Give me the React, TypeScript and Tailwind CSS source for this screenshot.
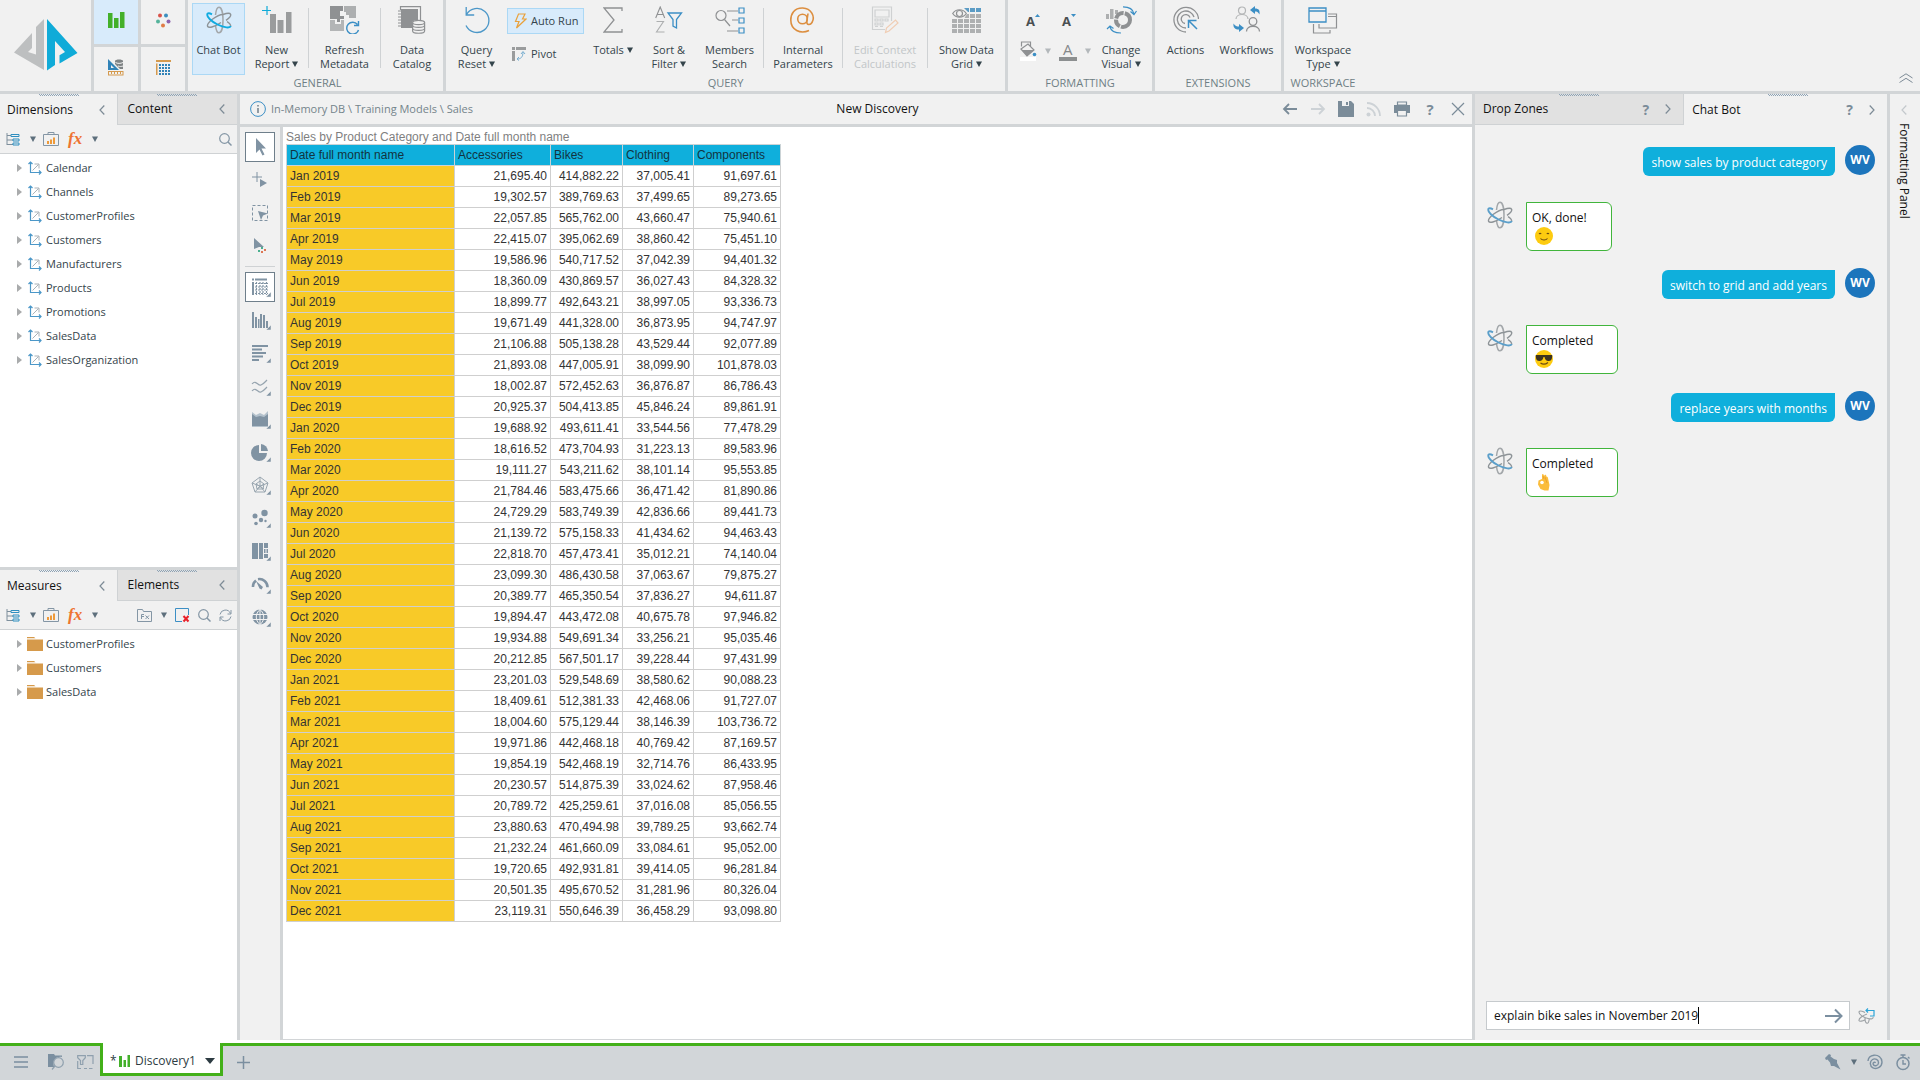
import React from 'react';

type IconProps = { className?: string };

interface SvgProps {
    w: number;
    h: number;
    children: React.ReactNode;
    className?: string;
}

const Svg: React.FC<SvgProps> = ({ w, h, children, className = '' }) => (
    <svg width={w} height={h} viewBox={`0 0 ${w} ${h}`} fill="none" className={`flex-shrink-0 ${className}`} aria-hidden="true">
        {children}
    </svg>
);

/* ---------- shared icons ---------- */

const Caret: React.FC<IconProps> = ({ className = 'text-[#5d6f7c]' }) => (
    <Svg w={6} h={6} className={className}>
        <path d="M0 .5h6L3 6z" fill="currentColor" />
    </Svg>
);

const Chevron: React.FC<{ right?: boolean; light?: boolean }> = ({ right, light }) => (
    <Svg w={6} h={10}>
        <path d={right ? 'M.7.5L5 5 .7 9.5' : 'M5.3.5L1 5l4.3 4.5'} stroke={light ? '#c3c8cc' : '#7d8b96'} strokeWidth="1.2" />
    </Svg>
);

const AtomIcon: React.FC<{ accent: string }> = ({ accent }) => (
    <Svg w={26} h={28}>
        <path d="M9.5 9C10 4 11.300 1.200 13 1.200c2.500 0 4 5.800 4 12.800s-1.500 12.800-4 12.800c-1.700 0-3-2.800-3.500-7.500" stroke="#a3a7aa" strokeWidth="1.500" />
        <path d="M17 8.500c4-1.500 7-1.500 7.600-.2.600 1.500-1.200 3.700-4.600 6M15 16.500c-6 4-12 6-13.300 4-.8-1.400.8-4 4.300-7 4-3 8-5 11-5M21 15.500c2.500 1.800 3.800 3.500 3.600 4.500" stroke="#8d9397" strokeWidth="1.400" />
        <path d="M6 8.300C3.500 7 1.500 6.800 1.200 8.300c-.6 2.600 4.300 7.200 10.300 10.200 6.500 3.200 12.600 4 13.300 1.600" stroke={accent} strokeWidth="1.900" />
    </Svg>
);

const SearchIcon = () => (
    <Svg w={13} h={13}>
        <circle cx="5.5" cy="5.5" r="4.8" stroke="#8496a5" strokeWidth="1.2" />
        <path d="M9 9l3.5 3.5" stroke="#8496a5" strokeWidth="1.5" />
    </Svg>
);

const BarsIcon: React.FC<{ small?: boolean }> = ({ small }) => small ? (
    <Svg w={12} h={12}>
        <path d="M0 1h3v11H0zM4.5 5H7v7H4.500zM8.500 0H11v12H8.500z" fill="#43b02a" />
    </Svg>
) : (
    <Svg w={17} h={16}>
        <path d="M0 1h4.500v15H0zM6 6h4.500v10H6zM12 0h4.500v16H12z" fill="#43b02a" />
    </Svg>
);

/* ---------- ribbon icons ---------- */

const Logo = () => (
    <Svg w={64} h={52}>
        <path d="M18 14L0 33.500 30 51V0l-8 8v27.500L14 33l4-4z" fill="#bdbfc0" />
        <path d="M33 0l30.500 34-18 10.500v-8.300l5.500-3.300L41 22v24l-8 5.500z" fill="#10abd8" />
    </Svg>
);

const DotsIcon = () => (
    <Svg w={15} h={15}>
        <circle cx="4" cy="2.500" r="2" fill="#d9534a" />
        <circle cx="10" cy="2.500" r="2" fill="#3c8fc0" />
        <circle cx="2" cy="8.500" r="2" fill="#55b39b" />
        <circle cx="12.500" cy="8.500" r="2" fill="#8d62ad" />
        <circle cx="7" cy="12.500" r="2" fill="#e07b45" />
    </Svg>
);

const ModelIcon = () => (
    <Svg w={16} h={17}>
        <path d="M0 0l11 11H0z" fill="#3183b8" />
        <path d="M3 6l3 3H3z" fill="#f1f1f1" />
        <path d="M7 2c0-2 8-2 8 0v8h-3L7 5z" fill="#7f8385" />
        <path d="M7.500 3.500c2 1.200 5 1.200 7.500 0M10 7c2 .8 3.500.5 5 0" stroke="#f1f1f1" />
        <rect x=".5" y="12.500" width="14.500" height="3.500" stroke="#d59a4e" />
        <path d="M3.500 13v2M6.500 13v2M9.500 13v2M12.500 13v2" stroke="#d59a4e" />
    </Svg>
);

const GridColorIcon = () => (
    <Svg w={15} h={15}>
        <path d="M0 0h15v2H0zM0 3.500h1.500V15H0z" fill="#d59a4e" />
        <path d="M3 4h2v2H3zM6 4h2v2H6zM9 4h2v2H9zM12 4h2v2h-2zM3 7h2v2H3zM6 7h2v2H6zM9 7h2v2H9zM12 7h2v2h-2zM3 10h2v2H3zM6 10h2v2H6zM9 10h2v2H9zM12 10h2v2h-2zM3 13h2v2H3zM6 13h2v2H6zM9 13h2v2H9zM12 13h2v2h-2z" fill="#3183b8" />
    </Svg>
);

const NewReportIcon = () => (
    <Svg w={30} h={28}>
        <path d="M5 0v9M0 4.500h9" stroke="#10abd8" strokeWidth="1.200" />
        <path d="M8 8h6v19H8zM15.500 14h6v13h-6zM24 6h5.500v21H24z" fill="#9a9c9d" />
    </Svg>
);

const RefreshMetaIcon = () => (
    <Svg w={30} h={28}>
        <path d="M0 0h13v5h-3v5h4v3H10v3H7v-3H0z" fill="#8f9193" />
        <path d="M14 0h12v12h-7V9h-3V6h-2z" fill="#adafb0" />
        <path d="M0 14h5v4h6v-4h3v11H0z" fill="#b3b5b6" />
        <path d="M27.500 18.500a6 6 0 1 0 1 5.500M28.500 15v4.500H24" stroke="#3c8fc5" strokeWidth="1.400" />
    </Svg>
);

const CatalogIcon = () => (
    <Svg w={30} h={28}>
        <path d="M3.500 4V.7h20V14M1 5h5M1 8h5M1 11h5M1 14h5M1 17h5M1 20h5" stroke="#8f9193" strokeWidth="1.200" />
        <path d="M4 3h17v11c-4 0-6 1-6 4v4H4z" fill="#8f9193" />
        <path d="M15.600 16.500v8.500c0 3 12 3 12 0v-8.500" fill="#f1f1f1" stroke="#8f9193" strokeWidth="1.200" />
        <ellipse cx="21.600" cy="16.500" rx="6" ry="2.200" fill="#f1f1f1" stroke="#8f9193" strokeWidth="1.200" />
        <path d="M15.600 19.500c0 2.500 12 2.500 12 0M15.600 22.500c0 2.500 12 2.500 12 0" stroke="#8f9193" strokeWidth="1.200" />
    </Svg>
);

const ResetIcon = () => (
    <Svg w={26} h={27}>
        <path d="M2.500 7.500A12 12 0 1 1 2 18.500M2.200 0v8h8" stroke="#4b97c8" strokeWidth="1.300" />
    </Svg>
);

const BoltIcon = () => (
    <Svg w={13} h={16}>
        <path d="M4.500 1H11L8.500 6H12L2.500 15 5 8.500H1.500z" stroke="#e9a13c" strokeWidth="1.200" />
    </Svg>
);

const PivotIcon = () => (
    <Svg w={15} h={14}>
        <path d="M0 0h3v3H0zM4 0h10v3H4zM0 4h3v10H0z" fill="#9a9c9d" />
        <path d="M5 12c4 0 6-2 6-7M9 7l2-2.500L13 7M7 10l-2 2 2 1.500" stroke="#78aed0" />
    </Svg>
);

const SigmaIcon = () => (
    <Svg w={20} h={26}>
        <path d="M19 4V1H1l10 12L1 25h18v-3" stroke="#8f9193" strokeWidth="1.300" />
    </Svg>
);

const SortIcon = () => (
    <Svg w={28} h={28}>
        <path d="M.7 12L5.200 1l4.500 11M2.200 8.500h6" stroke="#8f9193" strokeWidth="1.100" />
        <path d="M1.500 15.500h7L1.500 26h8" stroke="#adafb0" strokeWidth="1.100" />
        <path d="M13 7h13.500L21.500 13.500V22l-3.500-2v-6.500z" stroke="#3c8fc5" strokeWidth="1.300" />
    </Svg>
);

const MembersIcon = () => (
    <Svg w={30} h={28}>
        <circle cx="6" cy="9.500" r="5" stroke="#8f9193" strokeWidth="1.200" />
        <path d="M9.500 13.500L15 20M12 5h11M17 14h6M12 25h11" stroke="#8f9193" strokeWidth="1.200" />
        <path d="M24 2h5v5h-5zM24 12h5v5h-5zM24 22h5v5h-5z" stroke="#3c8fc5" strokeWidth="1.200" />
    </Svg>
);

const AtIcon = () => (
    <Svg w={26} h={26}>
        <circle cx="12.500" cy="12" r="4.800" stroke="#dc8e3f" strokeWidth="1.600" />
        <path d="M18 6.500l-1.200 8c-.3 3.800 3.500 3.800 5.200 1 3.500-6-.8-14-9.300-14.500C4 .8.800 7 .8 13c0 10 9.700 14.500 18.200 10.500" stroke="#dc8e3f" strokeWidth="1.600" />
    </Svg>
);

const CalculatorIcon = () => (
    <Svg w={28} h={28}>
        <path d="M20.500 15V1h-19v22.500H14" stroke="#cfd1d2" strokeWidth="1.200" />
        <path d="M4 4h14v7H4zM4 13h3v2H4zM9 13h3v2H9zM14 13h3v2h-3zM4 17h3v2H4zM9 17h3v2H9zM4 20.500h3M9 20.500h3" stroke="#cfd1d2" strokeWidth="1.200" />
        <path d="M14.500 26.500l1-4.500 9-8 2.500 3-9 8z" stroke="#f0cdb4" strokeWidth="1.200" />
    </Svg>
);

const DATA_GRID_ROWS = [1, 7, 12, 17, 22];

const ShowGridIcon = () => (
    <Svg w={30} h={27}>
        {DATA_GRID_ROWS.map((y) =>
            [0, 6, 12, 18, 24].map((x) => (
                <rect key={`${x}-${y}`} x={x} y={y} width="5" height="4" fill={y === 1 ? '#5c9cc5' : '#aeb0b1'} />
            ))
        )}
        <path d="M0 0h11l5 5-4 7H0z" fill="#f1f1f1" />
        <path d="M.7 6.500C4 1.500 11 1.500 14.300 6.500 11 11.500 4 11.500.7 6.500z" fill="#f1f1f1" stroke="#8f9193" strokeWidth="1.200" />
        <circle cx="7.500" cy="6.500" r="3" stroke="#8f9193" strokeWidth="1.200" />
    </Svg>
);

const BucketIcon = () => (
    <Svg w={17} h={20}>
        <path d="M1.500 5.500V1h9v4M1 8l7-5 6 6-7 6z" stroke="#8f9193" strokeWidth="1.200" />
        <path d="M2 9h12l-7 6z" fill="#8f9193" />
        <circle cx="14.500" cy="13.500" r="1.800" fill="#3c8fc5" />
        <path d="M0 16h16v4H0z" fill="#fff" />
    </Svg>
);

const ChangeVisualIcon = () => (
    <Svg w={31} h={28}>
        <path d="M0 8h3v5H0zM4 3h3.500v10H4zM9 4h3v4H9z" fill="#adafb0" />
        <circle cx="17" cy="14" r="7" stroke="#8f9193" strokeWidth="4" strokeDasharray="13 1.200 8 1.200 10 1.200" />
        <path d="M17 .8c6 0 10 2 11 7M24.500 5.500l3.500 3 2.500-3.500M15 27C8 27 5 25 4 21M1 23l3-3 3.500 2.500" stroke="#3c8fc5" strokeWidth="1.200" />
    </Svg>
);

const ActionsIcon = () => (
    <Svg w={26} h={28}>
        <path d="M13 26A12.300 12.300 0 1 1 25.500 13M13 22A8.500 8.500 0 1 1 21 11M12 17.500a4.500 4.500 0 1 1 5-6" stroke="#8f9193" strokeWidth="1.300" />
        <path d="M15 14l9 9M15.500 22v-7.500h8" stroke="#3c8fc5" strokeWidth="1.500" />
    </Svg>
);

const WorkflowsIcon = () => (
    <Svg w={28} h={28}>
        <circle cx="9" cy="4.500" r="3.500" stroke="#b3b5b6" strokeWidth="1.200" />
        <path d="M3 13c0-6 12-6 12 0" stroke="#b3b5b6" strokeWidth="1.200" />
        <circle cx="20" cy="15.500" r="3.800" stroke="#8f9193" strokeWidth="1.300" />
        <path d="M13.500 25.500c0-7 13-7 13 0" stroke="#8f9193" strokeWidth="1.300" />
        <path d="M17 4l5-4v2.500c4 0 5 2 4.500 6C25 6 24 5.500 22 5.500V8zM11 22l-5 4v-2.500c-4 0-6-2-5.500-6C2 20 4 20.500 6 20.500V18z" fill="#3c8fc5" />
    </Svg>
);

const WorkspaceIcon = () => (
    <Svg w={30} h={27}>
        <path d="M1 1h17v14H1zM1 4h17" stroke="#3c8fc5" strokeWidth="1.300" />
        <path d="M20 7h8.500v14H11v-4M20 9.500h8M5.500 17v9H22v-3" stroke="#8f9193" strokeWidth="1.200" />
    </Svg>
);

/* ---------- panel icons ---------- */

const TreeIcon = () => (
    <Svg w={14} h={13}>
        <path d="M1 0v12M1 2.500h4M1 7h6M1 11.500h6" stroke="#7e8f9c" />
        <path d="M5 1.500h8v2H5zM7 6h6v2H7zM7 10h6v2H7z" stroke="#2f8fc0" />
    </Svg>
);

const CaseIcon = () => (
    <Svg w={16} h={14}>
        <path d="M.5 2.500h15v11H.5zM5 2V.5h6V2" stroke="#8496a5" />
        <path d="M4 9h2v3H4zM7 7.500h2V12H7zM10 5.500h2V12h-2z" fill="#ee9a3a" />
    </Svg>
);

const AxesIcon = () => (
    <Svg w={14} h={14}>
        <path d="M2.500 1v10.500H13M.5 3l2-2 2 2M11 9.500l2 2-2 2" stroke="#4b97c8" strokeWidth="1.200" />
        <path d="M4.500 9.500l6-6M6.500 3h4.500v4.500" stroke="#a9b1b7" />
    </Svg>
);

const FolderIcon = () => (
    <Svg w={16} h={14}>
        <path d="M0 0h7l1.500 1.200H0zM0 2.500h16V14H0z" fill="#d69a4b" />
    </Svg>
);

const FxFolderIcon = () => (
    <Svg w={16} h={13}>
        <path d="M.5.500h5l1 2h8v10H.5z" stroke="#8496a5" />
        <path d="M4.500 10V5.500H7M4.500 7.500H7M8.500 6.500l3.500 3.500M12 6.500L8.500 10" stroke="#8496a5" />
    </Svg>
);

const DeleteBoxIcon = () => (
    <Svg w={15} h={15}>
        <path d="M13.500 7V.5H.5v13H7" stroke="#3c8fc5" />
        <path d="M8.500 8l5 5.500M13.500 8l-5 5.500" stroke="#e8202a" strokeWidth="2" />
    </Svg>
);

const SyncIcon = () => (
    <Svg w={13} h={13}>
        <path d="M1 5.500a5.500 5.500 0 0 1 10.500-1M12 1v4H8.500M12 7.500a5.500 5.500 0 0 1-10.500 1M1 12V8h3.500" stroke="#8496a5" />
    </Svg>
);

/* ---------- canvas tool icons ---------- */

const C = '#8093a3';

const canvasTools: { name: string; art: React.ReactNode }[] = [
    { name: 'Select', art: <path d="M6 1v15l3.500-3.500 3 6 2-1-3-6h4.500z" fill={C} /> },
    { name: 'Add select', art: <><path d="M7 2v10M2 7h10" stroke={C} /><path d="M10 9l7 4-7 4z" fill={C} /></> },
    { name: 'Lasso', art: <><path d="M2.500 2.500h15v15h-15z" stroke={C} strokeDasharray="3 2" /><path d="M8 8l10 2.500-5 2-2 4.500z" fill={C} /></> },
    { name: 'Point select', art: <><path d="M4 2l10 9H9l-5 2z" fill={C} /><path d="M11 11h2v2h-2zM8 14h2v2H8z" fill="#4ab08f" /><path d="M14 13h2v2h-2zM11 15h2v2h-2z" fill="#dd7755" /></> },
];

const visualTools: { name: string; art: React.ReactNode }[] = [
    {
        name: 'Grid',
        art: (
            <>
                <path d="M5 2.500h12M3 5v13M2 2.500h2" stroke={C} strokeWidth="2" />
                <path d="M6.500 5v13M10 5v13M13 5v13M16.500 5v13M5 6.500h13M5 10h13M5 13h13M5 16.500h13" stroke={C} strokeWidth="1.200" strokeDasharray="2 1" />
            </>
        ),
    },
    { name: 'Column', art: <path d="M2 2h2v16H2zM5 7h2v11H5zM8 9h1.500v9H8zM10 4h2v14h-2zM13 5h2v13h-2zM16 11h2v7h-2z" fill={C} /> },
    { name: 'Bar', art: <path d="M2 2h16v2H2zM2 5.500h10v2H2zM2 9h14v2H2zM2 12.500h11v2H2zM2 16h7v2H2z" fill={C} /> },
    { name: 'Line', art: <path d="M2 8c4-5 6 2.500 9 1 2.500-1 4-3 6-5M2 15c4-5 6 2.500 9 1 2.500-1 4-3 6-5" stroke="#95a3ae" strokeWidth="1.200" /> },
    { name: 'Area', art: <><path d="M2 3l4 3 4-2 4 2 4-4v16H2z" fill="#b3c1cc" /><path d="M2 5l4 3 4-1 4 1 4-3v12H2z" fill={C} /></> },
    { name: 'Pie', art: <><path d="M9 3v8h8a8 8 0 1 1-8-8z" fill={C} /><path d="M11 2a7.500 7.500 0 0 1 7 7h-7z" fill={C} /></> },
    { name: 'Radar', art: <path d="M10 2l8 6-3 9H5L2 8zM10 6l4 3-1 5H7L6 9zM10 2v9l8-3M10 11l5 6M10 11l-5 6M10 11L2 8M6 9l8 5M14 9l-7 5" stroke="#98a5af" /> },
    { name: 'Scatter', art: <><circle cx="14.500" cy="5" r="3.200" fill={C} /><circle cx="5" cy="8" r="2.500" fill={C} /><circle cx="11" cy="12" r="2.200" fill={C} /><circle cx="6" cy="15.500" r="1.800" fill={C} /><circle cx="15.500" cy="13" r="1.200" fill={C} /></> },
    { name: 'Treemap', art: <path d="M2 2h6v16H2zM9 2h4v16H9zM14 2h4v5h-4zM14 8h1.500v4H14zM16.500 8H18v4h-1.500zM14 13h4v4h-4z" fill={C} /> },
    { name: 'Gauge', art: <><path d="M3 13a7.500 7.500 0 0 1 3-6.500M8 5.200a8 8 0 0 1 9.500 8" stroke={C} strokeWidth="2.600" /><path d="M6 7l7 6-1.500 2.500-2-1z" fill={C} /></> },
    { name: 'Map', art: <><circle cx="10" cy="10" r="7.500" fill={C} /><path d="M2 7.500h16M2 12.500h16M10 2v16M10 2.500c-5 4-5 11 0 15M10 2.500c5 4 5 11 0 15" stroke="#f1f1f1" /></> },
];

/* ---------- ribbon ---------- */

interface RibbonButtonProps {
    icon: React.ReactNode;
    lines: string[];
    width: string;
    menu?: boolean;
    active?: boolean;
    disabled?: boolean;
}

const RibbonButton: React.FC<RibbonButtonProps> = ({ icon, lines, width, menu, active, disabled }) => (
    <button
        disabled={disabled}
        className={`flex h-[72px] flex-col items-center border pt-[3px] text-[11px] leading-[14px] ${width} ${
            active ? 'border-[#abd8f5] bg-[#d8ebfb]' : 'border-transparent'
        } ${disabled ? 'text-[#c2c6c8]' : 'text-[#34444b]'}`}
    >
        <span className="mb-[10px] flex h-[26px] items-center">{icon}</span>
        {lines.map((line, i) => (
            <span key={line} className="flex items-center gap-[3px] whitespace-nowrap">
                {line}
                {menu && i === lines.length - 1 && <Caret className="text-[#34444b]" />}
            </span>
        ))}
    </button>
);

const Group: React.FC<{ label: string; className?: string; last?: boolean; children: React.ReactNode }> = ({ label, className = '', last, children }) => (
    <section className={`flex flex-col justify-between pt-[3px] ${last ? '' : 'border-r-[3px] border-[#d2d5d7]'} ${className}`}>
        <div className="flex">{children}</div>
        <h2 className="text-center text-[11px] leading-4 text-[#6f7f85]">{label}</h2>
    </section>
);

const Separator = () => <span className="mt-[5px] h-[60px] w-px bg-[#cfd2d4]" />;

const LetterSize: React.FC<{ down?: boolean }> = ({ down }) => (
    <button aria-label={down ? 'Decrease font' : 'Increase font'} className="flex h-6 w-9 items-start justify-center text-[#4a4f52]">
        <span className="text-[13px] font-bold leading-6">A</span>
        <Svg w={5} h={12}>
            <path d={down ? 'M0 5h5L2.500 8z' : 'M0 8h5L2.500 5z'} fill="#3c8fc5" />
        </Svg>
    </button>
);

const Ribbon = () => (
    <header className="flex h-[94px] flex-shrink-0 border-b-[3px] border-[#d2d5d7] bg-[#f1f1f1]">
        <div className="flex w-[94px] items-end justify-center border-r-[3px] border-[#d2d5d7] pb-5">
            <Logo />
        </div>
        <nav className="grid w-[94px] grid-cols-2 grid-rows-2 gap-[3px] border-r-[3px] border-[#d2d5d7] bg-[#d2d5d7]">
            <button aria-label="Discover" className="flex items-center justify-center bg-[#d8ebfb] pb-1"><BarsIcon /></button>
            <button aria-label="Present" className="flex items-center justify-center bg-[#f1f1f1] pb-1"><DotsIcon /></button>
            <button aria-label="Model" className="flex items-center justify-center bg-[#f1f1f1] pb-1"><ModelIcon /></button>
            <button aria-label="Formulate" className="flex items-center justify-center bg-[#f1f1f1] pb-1"><GridColorIcon /></button>
        </nav>
        <Group label="GENERAL" className="w-[258px] pl-[4px]">
            <RibbonButton icon={<AtomIcon accent="#10abe0" />} lines={['Chat Bot']} width="w-[53px]" active />
            <RibbonButton icon={<NewReportIcon />} lines={['New', 'Report']} width="w-[63px]" menu />
            <Separator />
            <RibbonButton icon={<RefreshMetaIcon />} lines={['Refresh', 'Metadata']} width="w-[71px]" />
            <Separator />
            <RibbonButton icon={<CatalogIcon />} lines={['Data', 'Catalog']} width="w-[62px]" />
        </Group>
        <Group label="QUERY" className="w-[562px]">
            <RibbonButton icon={<ResetIcon />} lines={['Query', 'Reset']} width="w-[61px]" menu />
            <div className="flex w-[77px] flex-col gap-2 pt-[5px] text-[11px] text-[#34444b]">
                <button className="flex h-[26px] items-center gap-1 border border-[#abd8f5] bg-[#d8ebfb] pl-[6px]">
                    <BoltIcon /> <span className="whitespace-nowrap">Auto Run</span>
                </button>
                <button className="flex h-6 items-center gap-1 pl-[5px]">
                    <PivotIcon /> Pivot
                </button>
            </div>
            <RibbonButton icon={<SigmaIcon />} lines={['Totals']} width="w-[58px]" menu />
            <RibbonButton icon={<SortIcon />} lines={['Sort &', 'Filter']} width="w-[54px]" menu />
            <RibbonButton icon={<MembersIcon />} lines={['Members', 'Search']} width="w-[67px]" />
            <Separator />
            <RibbonButton icon={<AtIcon />} lines={['Internal', 'Parameters']} width="w-[78px]" />
            <Separator />
            <RibbonButton icon={<CalculatorIcon />} lines={['Edit Context', 'Calculations']} width="w-[84px]" disabled />
            <Separator />
            <RibbonButton icon={<ShowGridIcon />} lines={['Show Data', 'Grid']} width="w-[77px]" menu />
        </Group>
        <Group label="FORMATTING" className="w-[147px]">
            <div className="w-[90px] pl-[7px] pt-[6px]">
                <div className="flex">
                    <LetterSize />
                    <LetterSize down />
                </div>
                <div className="mt-2 flex items-center gap-2 pl-[5px]">
                    <button aria-label="Fill color"><BucketIcon /></button>
                    <Caret className="text-[#b3b8bb]" />
                    <button aria-label="Font color" className="border-b-4 border-[#8c8f90] px-1 text-[15px] leading-4 text-[#85888a]">A</button>
                    <Caret className="text-[#b3b8bb]" />
                </div>
            </div>
            <RibbonButton icon={<ChangeVisualIcon />} lines={['Change', 'Visual']} width="w-[46px]" menu />
        </Group>
        <Group label="EXTENSIONS" className="w-[129px]">
            <RibbonButton icon={<ActionsIcon />} lines={['Actions']} width="w-[61px]" />
            <RibbonButton icon={<WorkflowsIcon />} lines={['Workflows']} width="w-[61px]" />
        </Group>
        <Group label="WORKSPACE" className="w-[78px]" last>
            <RibbonButton icon={<WorkspaceIcon />} lines={['Workspace', 'Type']} width="w-[78px]" menu />
        </Group>
        <button aria-label="Collapse ribbon" className="ml-auto mr-[7px] self-end pb-2">
            <Svg w={14} h={10}>
                <path d="M.5 5L7 .8 13.500 5M.5 9.500L7 5.300l6.500 4.200" stroke="#7d8b96" />
            </Svg>
        </button>
    </header>
);

/* ---------- side panels ---------- */

const Grip = () => (
    <Svg w={40} h={2} className="absolute left-[39px] top-0">
        <path d="M0 .5h40M1 1.500h40" stroke="#8ea3b5" strokeDasharray="1 1" />
    </Svg>
);

const PanelTab: React.FC<{ title: string; active?: boolean }> = ({ title, active }) => (
    <button
        className={`relative flex h-[31px] flex-1 items-center justify-between pr-3 text-[12px] text-[#111] ${
            active ? 'pl-[7px]' : 'border-b border-l border-[#cfd2d4] bg-[#e1e1e1] pl-[10px]'
        }`}
    >
        <Grip />
        <span className="font-medium">{title}</span>
        <Chevron />
    </button>
);

interface TreePanelProps {
    tabs: [string, string];
    items: string[];
    icon: React.ReactNode;
    className: string;
    extraTools?: boolean;
}

const TreePanel: React.FC<TreePanelProps> = ({ tabs, items, icon, className, extraTools }) => (
    <section className={`flex min-h-0 flex-col ${className}`}>
        <div className="flex bg-[#f1f1f1]">
            <PanelTab title={tabs[0]} active />
            <PanelTab title={tabs[1]} />
        </div>
        <div className="flex h-[29px] items-center border-b border-[#cfd2d4] bg-[#f1f1f1] pl-[6px] pr-[5px]">
            <TreeIcon />
            <span className="ml-[10px]"><Caret /></span>
            <span className="ml-[7px]"><CaseIcon /></span>
            <span className="ml-[9px] w-4 font-['Liberation_Serif',serif] text-[17px] font-bold italic leading-4 text-[#ee7432]">fx</span>
            <span className="ml-2"><Caret /></span>
            <div className="ml-auto flex items-center gap-2">
                {extraTools && (
                    <>
                        <FxFolderIcon />
                        <Caret />
                        <DeleteBoxIcon />
                    </>
                )}
                <SearchIcon />
                {extraTools && <SyncIcon />}
            </div>
        </div>
        <ul className="pt-[2px]">
            {items.map((item) => (
                <li key={item} className="flex h-6 items-center pl-[17px] text-[11px] text-[#34444b]">
                    <Svg w={5} h={8}>
                        <path d="M0 0l5 4-5 4z" fill="#a9abac" />
                    </Svg>
                    <span className="ml-[5px] mr-[3px] flex w-4 justify-center">{icon}</span>
                    {item}
                </li>
            ))}
        </ul>
    </section>
);

/* ---------- grid ---------- */

const columns = ['Accessories', 'Bikes', 'Clothing', 'Components'];

const rows: string[][] = [
    ['Jan 2019', '21,695.40', '414,882.22', '37,005.41', '91,697.61'],
    ['Feb 2019', '19,302.57', '389,769.63', '37,499.65', '89,273.65'],
    ['Mar 2019', '22,057.85', '565,762.00', '43,660.47', '75,940.61'],
    ['Apr 2019', '22,415.07', '395,062.69', '38,860.42', '75,451.10'],
    ['May 2019', '19,586.96', '540,717.52', '37,042.39', '94,401.32'],
    ['Jun 2019', '18,360.09', '430,869.57', '36,027.43', '84,328.32'],
    ['Jul 2019', '18,899.77', '492,643.21', '38,997.05', '93,336.73'],
    ['Aug 2019', '19,671.49', '441,328.00', '36,873.95', '94,747.97'],
    ['Sep 2019', '21,106.88', '505,138.28', '43,529.44', '92,077.89'],
    ['Oct 2019', '21,893.08', '447,005.91', '38,099.90', '101,878.03'],
    ['Nov 2019', '18,002.87', '572,452.63', '36,876.87', '86,786.43'],
    ['Dec 2019', '20,925.37', '504,413.85', '45,846.24', '89,861.91'],
    ['Jan 2020', '19,688.92', '493,611.41', '33,544.56', '77,478.29'],
    ['Feb 2020', '18,616.52', '473,704.93', '31,223.13', '89,583.96'],
    ['Mar 2020', '19,111.27', '543,211.62', '38,101.14', '95,553.85'],
    ['Apr 2020', '21,784.46', '583,475.66', '36,471.42', '81,890.86'],
    ['May 2020', '24,729.29', '583,749.39', '42,836.66', '89,441.73'],
    ['Jun 2020', '21,139.72', '575,158.33', '41,434.62', '94,463.43'],
    ['Jul 2020', '22,818.70', '457,473.41', '35,012.21', '74,140.04'],
    ['Aug 2020', '23,099.30', '486,430.58', '37,063.67', '79,875.27'],
    ['Sep 2020', '20,389.77', '465,350.54', '37,836.27', '94,611.87'],
    ['Oct 2020', '19,894.47', '443,472.08', '40,675.78', '97,946.82'],
    ['Nov 2020', '19,934.88', '549,691.34', '33,256.21', '95,035.46'],
    ['Dec 2020', '20,212.85', '567,501.17', '39,228.44', '97,431.99'],
    ['Jan 2021', '23,201.03', '529,548.69', '38,580.62', '90,088.23'],
    ['Feb 2021', '18,409.61', '512,381.33', '42,468.06', '91,727.07'],
    ['Mar 2021', '18,004.60', '575,129.44', '38,146.39', '103,736.72'],
    ['Apr 2021', '19,971.86', '442,468.18', '40,769.42', '87,169.57'],
    ['May 2021', '19,854.19', '542,468.19', '32,714.76', '86,433.95'],
    ['Jun 2021', '20,230.57', '514,875.39', '33,024.62', '87,958.46'],
    ['Jul 2021', '20,789.72', '425,259.61', '37,016.08', '85,056.55'],
    ['Aug 2021', '23,880.63', '470,494.98', '39,789.25', '93,662.74'],
    ['Sep 2021', '21,232.24', '461,660.09', '33,084.61', '95,052.00'],
    ['Oct 2021', '19,720.65', '492,931.81', '39,414.05', '96,281.84'],
    ['Nov 2021', '20,501.35', '495,670.52', '31,281.96', '80,326.04'],
    ['Dec 2021', '23,119.31', '550,646.39', '36,458.29', '93,098.80'],
];

const SalesGrid = () => (
    <div className="min-w-0 flex-1 overflow-hidden border-b border-[#d2d5d7] bg-white pl-[3px] pt-[3px] font-['Liberation_Sans',Arial,sans-serif] text-[12px]">
        <table className="table-fixed border-collapse leading-4 text-[#333]">
            <caption className="whitespace-nowrap text-left leading-[14px] text-[#7f7f7f]">
                Sales by Product Category and Date full month name
            </caption>
            <colgroup>
                <col className="w-[168px]" />
                <col className="w-[96px]" />
                <col className="w-[72px]" />
                <col className="w-[71px]" />
                <col className="w-[87px]" />
            </colgroup>
            <thead>
                <tr className="h-[21px] bg-[#0fafdc] text-left text-[#12343f]">
                    {['Date full month name', ...columns].map((c) => (
                        <th key={c} scope="col" className="border border-[#cbd3d6] px-[3px] font-normal">{c}</th>
                    ))}
                </tr>
            </thead>
            <tbody>
                {rows.map(([month, ...values]) => (
                    <tr key={month} className="h-[21px]">
                        <th scope="row" className="border border-[#cfcfcf] bg-[#f8ca28] px-[3px] text-left font-normal">{month}</th>
                        {values.map((v, i) => (
                            <td key={columns[i]} className="border border-[#cfcfcf] px-[3px] text-right">{v}</td>
                        ))}
                    </tr>
                ))}
            </tbody>
        </table>
    </div>
);

const ToolButton: React.FC<{ name: string; active?: boolean; corner?: boolean; children: React.ReactNode }> = ({ name, active, corner, children }) => (
    <button aria-label={name} className={`flex h-[30px] w-[30px] items-center justify-center border ${active ? 'border-[#6f7f8b] bg-white' : 'border-transparent'}`}>
        <svg width="22" height="22" viewBox="0 -1 22 22" fill="none" className="ml-[2px]" aria-hidden="true">
            {children}
            {corner && <path d="M21 15v5h-5z" fill={C} stroke="#f1f1f1" strokeWidth=".5" />}
        </svg>
    </button>
);

const headerActions: { name: string; art: React.ReactNode }[] = [
    { name: 'Back', art: <path d="M15 8H2M7 3L2 8l5 5" stroke="#7b8c99" strokeWidth="1.800" /> },
    { name: 'Forward', art: <path d="M1 8h13M9 3l5 5-5 5" stroke="#cdd2d6" strokeWidth="1.800" /> },
    { name: 'Save', art: <><path d="M0 0h13l3 3v13H0z" fill="#7b8c99" /><path d="M4 0h7v5H4z" fill="#f1f1f1" /><path d="M8 1h2v3H8z" fill="#7b8c99" /></> },
    { name: 'Feed', art: <><circle cx="2.500" cy="13.500" r="2" fill="#cdd2d6" /><path d="M1 7a8 8 0 0 1 8 8M1 2a13 13 0 0 1 13 13" stroke="#cdd2d6" strokeWidth="1.800" /></> },
    { name: 'Print', art: <><path d="M0 4h16v8H0z" fill="#7b8c99" /><path d="M3.500 1h9v3h-9zM3.500 9.500h9v5.500h-9z" fill="#f1f1f1" stroke="#7b8c99" strokeWidth="1.200" /></> },
];

const Workspace = () => (
    <main className="flex min-w-0 flex-1 flex-col border-r-[3px] border-[#d2d5d7]">
        <div className="flex h-[33px] flex-shrink-0 items-center justify-between border-b-[3px] border-[#d2d5d7] bg-[#f1f1f1] pl-[10px] pr-[6px] text-[12px]">
            <div className="flex items-center gap-[5px] text-[11px] text-[#74848b]">
                <Svg w={16} h={16}>
                    <circle cx="8" cy="8" r="7.400" stroke="#3c8fc5" />
                    <path d="M8 7v5M8 4v1.500" stroke="#5d6f7c" strokeWidth="1.300" />
                </Svg>
                In-Memory DB \ Training Models \ Sales
            </div>
            <h1 className="text-[#111]">New Discovery</h1>
            <div className="flex items-center gap-3">
                {headerActions.map((a) => (
                    <button key={a.name} aria-label={a.name}>
                        <Svg w={16} h={16}>{a.art}</Svg>
                    </button>
                ))}
                <button className="w-4 text-[15px] font-bold leading-4 text-[#7b8c99]">?</button>
                <button aria-label="Close">
                    <Svg w={16} h={16}>
                        <path d="M2 2l12 12M14 2L2 14" stroke="#7b8c99" strokeWidth="1.200" />
                    </Svg>
                </button>
            </div>
        </div>
        <div className="flex min-h-0 flex-1">
            <div className="flex w-[43px] flex-shrink-0 flex-col gap-[3px] border-r-[3px] border-[#d2d5d7] bg-[#f1f1f1] pl-[5px] pt-[5px]">
                {canvasTools.map((t, i) => (
                    <ToolButton key={t.name} name={t.name} active={i === 0}>{t.art}</ToolButton>
                ))}
                <hr className="my-[2px] w-[30px] border-[#cfd2d4]" />
                {visualTools.map((t, i) => (
                    <ToolButton key={t.name} name={t.name} active={i === 0} corner>{t.art}</ToolButton>
                ))}
            </div>
            <SalesGrid />
        </div>
    </main>
);

/* ---------- chat ---------- */

const SmileEmoji = () => (
    <Svg w={18} h={18}>
        <circle cx="9" cy="9" r="9" fill="#fdcb10" />
        <path d="M4 7c.7-.8 1.500-.8 2.200 0M11.800 7c.7-.8 1.500-.8 2.200 0M5.500 11.500c1.800 2 5.200 2 7 0" stroke="#6b4a12" strokeWidth="1.100" />
    </Svg>
);

const CoolEmoji = () => (
    <Svg w={18} h={18}>
        <circle cx="9" cy="9" r="9" fill="#fdcb10" />
        <path d="M.8 5h16.400v2c-.5 3-1.500 4-3.700 4S10 9.500 9.500 7h-1C8 9.500 6.700 11 4.500 11S1.300 10 .8 7z" fill="#3c3320" />
        <path d="M5.500 13c2 1.500 5 1.500 7.500-.5" stroke="#6b4a12" strokeWidth="1.200" />
    </Svg>
);

const OkHandEmoji = () => (
    <Svg w={18} h={18}>
        <path d="M7 1.500c1-1.500 2 0 2 1.500 1-2 2.500-1.500 2.300.5 1.500 0 1.700 1 2 3l1.200 5.500-1 5.500h-4L5.500 16 3 11.500l.5-4L7 6z" fill="#fbbd3c" />
        <circle cx="7" cy="9.500" r="1.800" fill="#fff" />
        <path d="M10 4l2 6M8 3l1 3" stroke="#e59a26" strokeWidth=".7" />
    </Svg>
);

const messages: { from: 'user' | 'bot'; text: string; emoji?: React.ReactNode }[] = [
    { from: 'user', text: 'show sales by product category' },
    { from: 'bot', text: 'OK, done!', emoji: <SmileEmoji /> },
    { from: 'user', text: 'switch to grid and add years' },
    { from: 'bot', text: 'Completed', emoji: <CoolEmoji /> },
    { from: 'user', text: 'replace years with months' },
    { from: 'bot', text: 'Completed', emoji: <OkHandEmoji /> },
];

const ChatTab: React.FC<{ title: string; active?: boolean }> = ({ title, active }) => (
    <button className={`relative flex h-[31px] items-center pl-2 pr-3 text-[12px] text-[#111] ${active ? 'flex-[203]' : 'flex-[209] border-b border-r border-[#cfd2d4] bg-[#e1e1e1]'}`}>
        <Svg w={40} h={2} className="absolute left-[84px] top-0">
            <path d="M0 .5h40M1 1.500h40" stroke="#8ea3b5" strokeDasharray="1 1" />
        </Svg>
        <span>{title}</span>
        <span className="ml-auto mr-4 text-[14px] font-bold text-[#7b8c99]">?</span>
        <Chevron right />
    </button>
);

const ChatPanel = () => (
    <aside className="flex w-[415px] flex-shrink-0 flex-col border-r-[3px] border-[#d2d5d7] bg-[#f1f1f1]">
        <div className="flex">
            <ChatTab title="Drop Zones" />
            <ChatTab title="Chat Bot" active />
        </div>
        <div className="flex-1 px-3 pt-5">
            {messages.map((m, i) => m.from === 'user' ? (
                <div key={i} className="flex h-14 items-start justify-end gap-[10px]">
                    <p className="mt-[2px] h-[29px] rounded-md rounded-tr-none bg-[#0fafdc] px-2 text-[12px] leading-8 text-white">{m.text}</p>
                    <span className="flex h-[30px] w-[30px] items-center justify-center rounded-full bg-[#1c75bc] text-[12px] font-bold text-white">WV</span>
                </div>
            ) : (
                <div key={i} className="flex h-[67px] items-start gap-[13px]">
                    <AtomIcon accent="#5b9fca" />
                    <div className="mt-px h-[49px] rounded-md rounded-tl-none border border-[#41b53c] bg-white pl-[5px] pr-6 pt-[6px] text-[12px] text-[#111]">
                        <p className="leading-[18px]">{m.text}</p>
                        <span className="ml-[3px] block">{m.emoji}</span>
                    </div>
                </div>
            ))}
        </div>
        <form className="mb-[10px] flex items-center gap-2 pl-[11px] pr-3" onSubmit={(e) => e.preventDefault()}>
            <div className="flex h-[29px] flex-1 items-center border border-[#c6cacd] bg-white pl-[7px] pr-[6px]">
                <input
                    aria-label="Message"
                    defaultValue="explain bike sales in November 2019"
                    className="field-sizing-content text-[12px] text-[#111] outline-none"
                />
                <span className="h-[17px] w-px bg-black" />
                <button type="submit" aria-label="Send" className="ml-auto">
                    <Svg w={18} h={16}>
                        <path d="M0 8h16M10 1.500L16.500 8 10 14.500" stroke="#7b8fa0" strokeWidth="2" />
                    </Svg>
                </button>
            </div>
            <button type="button" aria-label="Clear chat">
                <Svg w={17} h={16}>
                    <path d="M8 2.500h8V8h-4M10 .5l-2 2 2 2" stroke="#2ca5d8" strokeWidth="1.200" />
                    <path d="M7 4.500C4 2.500 1 2.500 1 4.200c0 2.300 4.500 5.300 9 6.300 3.500.8 5.500.3 5-1.500M9 6c-4 1.500-8.500 4.500-8 6.500.4 1.200 3.500.7 6-.8M7 10c0 3 1 5.200 2.200 5.200S11 13.500 11.200 11" stroke="#9ba0a4" strokeWidth="1.100" />
                </Svg>
            </button>
        </form>
    </aside>
);

/* ---------- status bar ---------- */

const StatusBar = () => (
    <footer className="flex h-[37px] flex-shrink-0 items-start border-t-[3px] border-[#43b019] bg-[#d2d6d9]">
        <div className="flex h-8 w-[100px] items-center pl-[14px]">
            <button aria-label="Menu">
                <Svg w={14} h={12}><path d="M0 1h14M0 6h14M0 11h14" stroke="#7b8fa0" strokeWidth="1.600" /></Svg>
            </button>
            <button aria-label="Find content" className="ml-5">
                <Svg w={16} h={16}>
                    <path d="M0 0h6l1 1.500h7V3c-5-1-9 2-8.500 7 0 1.500.5 2 1 3H0z" fill="#7b8fa0" />
                    <circle cx="10.500" cy="8.500" r="4.800" stroke="#8fa0ae" strokeWidth="1.200" />
                    <path d="M7 12l-3 3.500" stroke="#8fa0ae" strokeWidth="1.200" />
                </Svg>
            </button>
            <button aria-label="Layouts" className="ml-[13px]">
                <Svg w={17} h={15}>
                    <path d="M4 13.500H.7V6M.7.7h7.600v2L5.800 5.500v4H3.500v-4L.7 2.700zM10 .7h6V9M7 13.500h3M12 13.500h3.500" stroke="#8fa0ae" strokeWidth="1.200" />
                </Svg>
            </button>
        </div>
        <button className="-mt-[3px] flex h-[33px] w-[123px] items-center rounded-t-[2px] border-x-[3px] border-b-[3px] border-[#43b019] bg-white pl-[7px] pt-[5px] text-[12px] text-[#2d3b42]">
            <span className="mr-1 w-[5px]">*</span>
            <BarsIcon small />
            <span className="ml-1">Discovery1</span>
            <Svg w={10} h={6} className="ml-auto mr-[5px]"><path d="M0 0h10L5 6z" fill="#2d3b42" /></Svg>
        </button>
        <button aria-label="New tab" className="ml-[14px] flex h-8 items-center">
            <Svg w={13} h={13}><path d="M6.500 0v13M0 6.500h13" stroke="#7b8fa0" strokeWidth="1.500" /></Svg>
        </button>
        <div className="ml-auto flex h-8 items-center pr-[9px]">
            <button aria-label="Pin" className="flex items-center gap-[10px]">
                <Svg w={16} h={16}><path d="M0 4l4-4 2 1-.5 1.500L9 5l3 1v3l3.500 6.500L9 12H6L5 8.500 2.500 5.500 1 6z" fill="#7b8fa0" /></Svg>
                <Caret />
            </button>
            <button aria-label="Activity" className="ml-[10px]">
                <Svg w={16} h={16}>
                    <path d="M8.500 9c-.8-1.500-2.800-.5-2.300 1.200.7 2.500 5 2 5.300-1.200C11.700 5.500 8 4 5.500 5.500 2.500 7.300 2.500 12 6 13.800c4 2 9-1 9-5.800C15 3.500 11 .8 7 1.200 3.500 1.600 1.200 4 1 7" stroke="#7b8fa0" strokeWidth="1.400" />
                </Svg>
            </button>
            <button aria-label="Timer" className="ml-3">
                <Svg w={16} h={17}>
                    <circle cx="8" cy="9.500" r="6" stroke="#7b8fa0" strokeWidth="1.500" />
                    <path d="M8 6v4h3M5.500 1h5M8 1v2M13 3l1.500 1.500" stroke="#7b8fa0" strokeWidth="1.400" />
                </Svg>
            </button>
        </div>
    </footer>
);

export default function App() {
    return (
        <div className="flex h-screen flex-col overflow-hidden bg-white font-['Open_Sans','Noto_Sans',sans-serif]">
            <Ribbon />
            <div className="flex min-h-0 flex-1 pb-[3px]">
                <aside className="flex w-[240px] flex-shrink-0 flex-col border-r-[3px] border-[#d2d5d7]">
                    <TreePanel
                        tabs={['Dimensions', 'Content']}
                        items={['Calendar', 'Channels', 'CustomerProfiles', 'Customers', 'Manufacturers', 'Products', 'Promotions', 'SalesData', 'SalesOrganization']}
                        icon={<AxesIcon />}
                        className="flex-[473]"
                    />
                    <div className="h-[3px] flex-shrink-0 bg-[#d2d5d7]" />
                    <TreePanel
                        tabs={['Measures', 'Elements']}
                        items={['CustomerProfiles', 'Customers', 'SalesData']}
                        icon={<FolderIcon />}
                        className="flex-[470]"
                        extraTools
                    />
                </aside>
                <Workspace />
                <ChatPanel />
                <aside className="flex w-[30px] flex-shrink-0 flex-col items-center bg-[#f1f1f1] pr-[2px] pt-[11px]">
                    <Chevron light />
                    <span className="mt-2 text-[12px] text-[#111] [writing-mode:vertical-rl]">Formatting Panel</span>
                </aside>
            </div>
            <StatusBar />
        </div>
    );
}
